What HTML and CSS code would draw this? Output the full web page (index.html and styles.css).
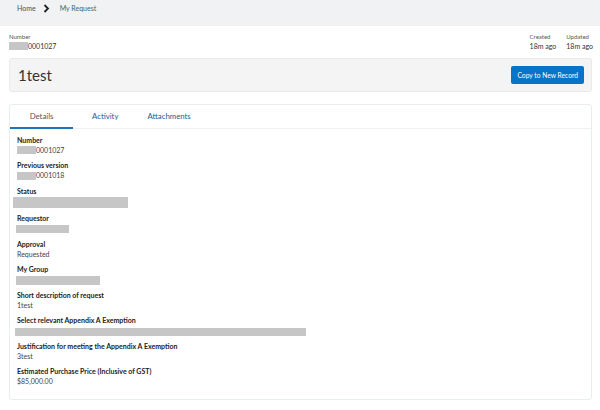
FILE: index.html
```html
<!DOCTYPE html>
<html lang="en">
<head>
  <meta charset="UTF-8">
  <title>My Request</title>
  <link rel="stylesheet" href="styles.css">
</head>
<body>

  <!-- Breadcrumb bar -->
  <div class="crumbs">
    <a class="crumb-home" href="#">Home</a>
    <svg class="crumb-sep" width="7" height="9" viewBox="0 0 7 9"><path d="M1.5 1 L5 4.5 L1.5 8" fill="none" stroke="#222" stroke-width="1.8"/></svg>
    <span class="crumb-current">My Request</span>
  </div>

  <div class="meta">
    <div class="meta-item">
      <div class="meta-label">Number</div>
      <div class="meta-value"><span class="redact r-num"></span>0001027</div>
    </div>
    <div class="meta-right">
      <div class="meta-item">
        <div class="meta-label">Created</div>
        <div class="meta-value">18m ago</div>
      </div>
      <div class="meta-item">
        <div class="meta-label">Updated</div>
        <div class="meta-value">18m ago</div>
      </div>
    </div>
  </div>

  <div class="title-box">
    <h1>1test</h1>
    <button class="copy-btn">Copy to New Record</button>
  </div>

  <div class="card">
    <div class="tabs">
      <div class="tab active">Details</div>
      <div class="tab tab-activity">Activity</div>
      <div class="tab tab-attach">Attachments</div>
    </div>

    <div class="fields">
      <div class="field">
        <div class="label">Number</div>
        <div class="value"><span class="redact r-num"></span>0001027</div>
      </div>
      <div class="field">
        <div class="label">Previous version</div>
        <div class="value"><span class="redact r-num"></span>0001018</div>
      </div>
      <div class="field">
        <div class="label">Status</div>
        <div class="value"><span class="redact r-status"></span></div>
      </div>
      <div class="field">
        <div class="label">Requestor</div>
        <div class="value"><span class="redact r-req"></span></div>
      </div>
      <div class="field">
        <div class="label">Approval</div>
        <div class="value">Requested</div>
      </div>
      <div class="field">
        <div class="label">My Group</div>
        <div class="value"><span class="redact r-group"></span></div>
      </div>
      <div class="field">
        <div class="label">Short description of request</div>
        <div class="value">1test</div>
      </div>
      <div class="field">
        <div class="label">Select relevant Appendix A Exemption</div>
        <div class="value"><span class="redact r-exempt"></span></div>
      </div>
      <div class="field">
        <div class="label">Justification for meeting the Appendix A Exemption</div>
        <div class="value">3test</div>
      </div>
      <div class="field">
        <div class="label">Estimated Purchase Price (Inclusive of GST)</div>
        <div class="value">$85,000.00</div>
      </div>
    </div>
  </div>

</body>
</html>
```

FILE: styles.css
```css
body {
  font-family: Lato, "Noto Sans", Arial, sans-serif;
  margin: 0;
  padding: 0;
  background-color: #fff;
  color: #333;
  font-size: 7px;
}

/* Breadcrumb */
.crumbs {
  background-color: #f0f2f3;
  height: 26px;
  padding: 3px 0 0 17px;
  box-sizing: border-box;
  display: flex;
  align-items: flex-start;
  gap: 7px;
  line-height: 10px;
  font-size: 7px;
}

.crumbs a {
  text-decoration: none;
}

.crumb-home {
  color: #3b5461;
}

.crumb-sep {
  margin-top: 1px;
}

.crumb-current {
  color: #3c6a6a;
  margin-left: 3px;
}

/* Record meta */
.meta {
  display: flex;
  justify-content: space-between;
  padding: 7px 7px 0 9px;
}

.meta-right {
  display: flex;
  gap: 10px;
}

.meta-label {
  font-size: 6px;
  color: #555;
  line-height: 8px;
}

.meta-value {
  line-height: 10px;
  color: #333;
}

.redact {
  display: inline-block;
  background-color: #c6c6c6;
  vertical-align: middle;
}

.r-num {
  width: 19px;
  height: 8px;
  margin-top: -2px;
}

/* Title */
.title-box {
  margin: 7px 8px 0 9px;
  height: 34px;
  box-sizing: border-box;
  background-color: #f4f4f4;
  border: 1px solid #e9ebeb;
  border-radius: 3px;
  display: flex;
  align-items: center;
  justify-content: space-between;
  padding: 0 7px 0 8px;
}

.title-box h1 {
  margin: 0;
  font-size: 15px;
  font-weight: normal;
  color: #333;
}

.copy-btn {
  font-family: inherit;
  font-size: 6.7px;
  background-color: #0874c5;
  color: #fff;
  border: none;
  border-radius: 2px;
  height: 18px;
  padding: 0 6px;
}

/* Details card */
.card {
  margin: 12px 8px 0 9px;
  height: 296px;
  box-sizing: border-box;
  border: 1px solid #e8eded;
  border-radius: 3px;
}

.tabs {
  display: flex;
  border-bottom: 1px solid #eef1f1;
  height: 23px;
}

.tab {
  color: #235b94;
  font-size: 7.8px;
  line-height: 22px;
}

.tab.active {
  color: #555;
  width: 63px;
  text-align: center;
  border-bottom: 2px solid #1b75bb;
  height: 22px;
}

.tab-activity {
  margin-left: 19px;
}

.tab-attach {
  margin-left: 29px;
}

.fields {
  padding: 6px 7px 0 7px;
}

.field {
  margin-bottom: 5.4px;
}

.label {
  font-weight: bold;
  color: #222;
  line-height: 10px;
}

.value {
  line-height: 10px;
  color: #444;
  min-height: 10px;
}

.r-status {
  width: 115px;
  height: 11px;
  margin-left: -4px;
}

.r-req {
  width: 53px;
  height: 8px;
  margin-left: -1px;
}

.r-group {
  width: 84px;
  height: 9px;
  margin-left: -1px;
}

.r-exempt {
  width: 291px;
  height: 8px;
  margin-left: -2px;
}
```
